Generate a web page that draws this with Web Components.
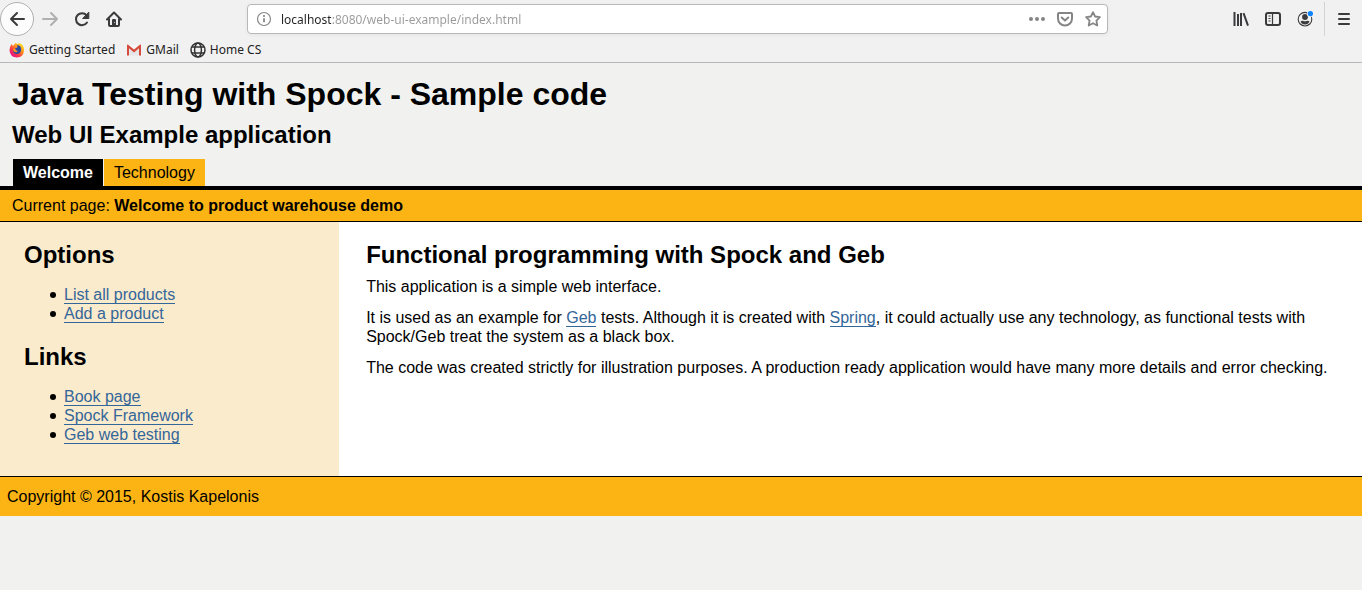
<!DOCTYPE html>
<html lang="en">
<head>
<meta charset="utf-8">
<meta name="viewport" content="width=device-width, initial-scale=1">
<title>Welcome to product warehouse demo</title>
<style>
  html { background: #f1f1ef; }
  body {
    margin: 0;
    color: #000;
    font: 16px/19px "Liberation Sans", Arial, sans-serif;
    --accent: #fbb414;
    --link: #336699;
  }
</style>
</head>
<body>
<browser-toolbar></browser-toolbar>
<bookmarks-bar></bookmarks-bar>
<site-header>
  <span slot="title">Java Testing with Spock - Sample code</span>
  <span slot="subtitle">Web UI Example application</span>
</site-header>
<current-page>Welcome to product warehouse demo</current-page>
<page-columns>
  <side-bar slot="side">
    <link-group heading="Options">
      <link-item>List all products</link-item>
      <link-item>Add a product</link-item>
    </link-group>
    <link-group heading="Links">
      <link-item>Book page</link-item>
      <link-item>Spock Framework</link-item>
      <link-item>Geb web testing</link-item>
    </link-group>
  </side-bar>
  <main-content slot="main"></main-content>
</page-columns>
<site-footer>Copyright © 2015, Kostis Kapelonis</site-footer>

<script>
  function define(name, markup, setup) {
    const template = document.createElement('template');
    template.innerHTML = markup;
    customElements.define(name, class extends HTMLElement {
      constructor() {
        super();
        this.attachShadow({ mode: 'open' }).append(template.content.cloneNode(true));
      }
      connectedCallback() { if (setup) setup(this, this.shadowRoot); }
    });
  }

  define('browser-toolbar', `
    <style>
      :host { display: flex; align-items: center; height: 38px; background: #f1f1f1; font: 12px/16px "Noto Sans", sans-serif; }
      button { box-sizing: border-box; display: grid; place-items: center; flex: none; width: 32px; height: 32px; margin: 0; padding: 0; border: 0; background: none; color: #3b3b3d; }
      button:disabled { color: #b0b0b0; }
      svg { display: block; width: 16px; height: 16px; fill: none; stroke: currentColor; stroke-width: 2; stroke-linecap: round; stroke-linejoin: round; }
      .back { width: 34px; height: 34px; border: 1px solid #b0b0b0; border-radius: 50%; background: #fcfcfc; }
      .nav { display: flex; align-items: center; flex: 1 1 0; }
      .field { box-sizing: border-box; display: flex; align-items: center; flex: 0 1 861px; min-width: 200px; height: 30px; margin-right: 7px; padding: 0 0 0 8px; border: 1px solid #b8b8b8; border-radius: 4px; background: #fff; box-shadow: 0 1px 4px #0000000d; }
      .field button { width: 28px; height: 28px; color: #858585; }
      .field .info { width: 16px; }
      input { flex: 1; min-width: 0; height: 26px; margin: 0 0 0 9px; padding: 0; border: 0; outline: 0; font: inherit; color: #999; background: linear-gradient(to right, #222 50px, #999 50px); background-clip: text; -webkit-background-clip: text; -webkit-text-fill-color: transparent; }
      .tools { display: flex; align-items: center; justify-content: flex-end; flex: 1 1 0; }
      .menu { margin-left: 3px; border-left: 1px solid #d4d4d4; width: 38px; height: 34px; }
    </style>
    <div class="nav">
      <button class="back" aria-label="Back"><svg viewBox="0 0 16 16"><path d="M15 8H2M8 2 2 8l6 6"/></svg></button>
      <button disabled aria-label="Forward"><svg viewBox="0 0 16 16"><path d="M1 8h14M9 2l6 6-6 6"/></svg></button>
      <button aria-label="Reload"><svg viewBox="0 0 16 16"><path d="M12.500 4.200A6 6 0 1 0 13 11.500"/><path fill="currentColor" stroke-width="1" d="M14.800 1.500v6H9z"/></svg></button>
      <button aria-label="Home"><svg viewBox="0 0 16 16"><path d="M1 8.500 8 1.500l7 7M3 8v6q0 1 1 1h8q1 0 1-1V8"/><path stroke="none" fill="currentColor" fill-rule="evenodd" d="M6 9q0-1 1-1h2q1 0 1 1v6H6zM8.300 11v1h.8v-1z"/></svg></button>
    </div>
    <div class="field">
      <button class="info" aria-label="Site information"><svg viewBox="0 0 16 16"><circle cx="8" cy="8" r="6.500" stroke-width="1.200"/><path d="M8 7.300v4" stroke-width="1.800" stroke-linecap="butt"/><circle cx="8" cy="5" r="1.100" fill="currentColor" stroke="none"/></svg></button>
      <input type="text" aria-label="Address" spellcheck="false" value="localhost:8080/web-ui-example/index.html">
      <button aria-label="Page actions"><svg viewBox="0 0 16 16"><g fill="currentColor" stroke="none"><circle cx="2" cy="8" r="2"/><circle cx="8" cy="8" r="2"/><circle cx="14" cy="8" r="2"/></g></svg></button>
      <button aria-label="Save to Pocket"><svg viewBox="0 0 16 16"><path d="M2 2h12q1 0 1 1v4.500a7 7 0 0 1-14 0V3q0-1 1-1zM4.700 6.500 8 9.600l3.300-3.100"/></svg></button>
      <button aria-label="Bookmark"><svg viewBox="0 0 16 16"><path stroke-width="1.800" d="m8 1.200 2.100 4.300 4.800.7-3.500 3.400.9 4.900L8 12.200l-4.300 2.300.9-4.900L1.100 6.200l4.800-.7z"/></svg></button>
    </div>
    <div class="tools">
      <button aria-label="Library"><svg viewBox="0 0 16 16"><path stroke-linecap="butt" d="M1.500 1v14M5 3v12M8 2v13M10.500 2.200l4.500 12.500"/></svg></button>
      <button aria-label="Sidebars"><svg viewBox="0 0 16 16"><rect x="1" y="2" width="14" height="12" rx="2"/><path stroke-width="1.200" d="M7.500 2v12M3.500 5h2M3.500 7.500h2M3.500 10h2" stroke-linecap="butt"/></svg></button>
      <button aria-label="Account"><svg viewBox="0 0 16 16"><circle cx="8" cy="8.200" r="6.800" stroke-width="1.100"/><g fill="currentColor" stroke="none"><circle cx="8" cy="6" r="2.900"/><path d="M3.500 10.500q1-1 2.500-.7 2 1 4 0 1.500-.3 2.500.7-1.200 3-4.500 3t-4.500-3"/></g><circle cx="13.300" cy="2.700" r="3.300" fill="#f1f1f1" stroke="none"/><circle cx="13.400" cy="2.600" r="2.600" fill="#0a84ff" stroke="none"/></svg></button>
      <button class="menu" aria-label="Menu"><svg viewBox="0 0 16 16"><path d="M3 3h10M3 8h10M3 13h10"/></svg></button>
    </div>`);

  define('bookmarks-bar', `
    <style>
      :host { box-sizing: border-box; display: flex; align-items: center; gap: 11px; height: 25px; padding: 0 9px 1px; border-bottom: 1px solid #b8b8b8; background: #f1f1f1; font: 12px/16px "Noto Sans", sans-serif; }
      a { display: flex; align-items: center; gap: 4px; color: #222; text-decoration: none; }
      svg { display: block; width: 16px; height: 16px; }
    </style>
    <a href="#getting-started"><svg viewBox="0 0 16 16"><defs><linearGradient id="fx" x1=".9" y1=".1" x2=".2" y2=".9"><stop offset="0" stop-color="#ffe226"/><stop offset=".35" stop-color="#ff9a1f"/><stop offset=".7" stop-color="#ff3647"/><stop offset="1" stop-color="#e31587"/></linearGradient></defs><path fill="url(#fx)" d="M2.500 2 4 4q1-2 3-3l1 1q4-2 6 2 1.500 2 1 5-.7 6-7 6.500Q1 15 .500 8.500.500 5 2.500 2"/><path fill="#2a4ba0" d="M8 3q4.500.500 4.200 5-.700 4-4.700 4Q4 11.500 4 8l2 1h2L5.500 7q0-1 2-1l1-1z"/><path fill="#ff9a1f" d="M4 7q1.500-.800 3 0L6 8.300l3 .700-1.500 1.200Q5 10.500 4 8z"/></svg>Getting Started</a>
    <a href="#gmail"><svg viewBox="0 0 16 16"><path fill="#e6e6e6" d="M1.500 3h13v10.500h-13z"/><path fill="#f8f8f8" d="M2 3h12L8 8.500z"/><path fill="#d54b3d" d="M1 2.500q1 0 1.500.500L8 7.600 13.500 3q.500-.500 1.500-.500v11h-2V6.200l-5 4.300-5-4.300v7.300H1z"/></svg>GMail</a>
    <a href="#home-cs"><svg viewBox="0 0 16 16" fill="none" stroke="#333" stroke-width="1.500"><circle cx="8" cy="8" r="7"/><ellipse cx="8" cy="8" rx="3.400" ry="7"/><path d="M2 5h12M2 11h12"/></svg>Home CS</a>`);

  define('site-header', `
    <style>
      :host { display: block; padding: 12px 12px 0; border-bottom: 4px solid #000; }
      h1, h2 { margin: 0; }
      h1 { font-size: 32px; line-height: 38px; }
      h2 { margin-top: 8px; font-size: 24px; line-height: 28px; }
      nav { display: flex; gap: 1px; margin-top: 10px; padding-left: 1px; }
      a { padding: 4px 10px; background: var(--accent); color: #000; text-decoration: none; }
      a[aria-current] { background: #000; color: #fff; font-weight: bold; }
    </style>
    <h1><slot name="title"></slot></h1>
    <h2><slot name="subtitle"></slot></h2>
    <nav aria-label="Pages"><a href="#welcome" aria-current="page">Welcome</a><a href="#technology">Technology</a></nav>`);

  define('current-page', `
    <style>
      :host { display: block; padding: 6px 12px; border-bottom: 1px solid #000; background: var(--accent); }
    </style>
    Current page: <strong><slot></slot></strong>`);

  define('page-columns', `
    <style>
      :host { display: grid; grid-template-columns: 24.9% 1fr; background: #fff; }
    </style>
    <slot name="side"></slot><slot name="main"></slot>`);

  define('side-bar', `
    <style>
      :host { display: flex; flex-direction: column; gap: 20px; padding: 19px 24px 32px; background: #fbebcd; }
    </style>
    <slot></slot>`);

  define('link-group', `
    <style>
      :host { display: block; }
      h2 { margin: 0 0 16px; font-size: 24px; line-height: 28px; }
      div { padding-left: 26px; }
    </style>
    <h2></h2>
    <div role="list"><slot></slot></div>`,
    (host, root) => { root.querySelector('h2').textContent = host.getAttribute('heading'); });

  define('link-item', `
    <style>
      :host { display: flex; align-items: center; gap: 8px; }
      :host::before { content: ""; flex: none; width: 6px; height: 6px; border-radius: 50%; background: #000; }
      a { color: var(--link); text-decoration: none; border-bottom: 1px solid; }
    </style>
    <div><a href="#"><slot></slot></a></div>`,
    host => host.setAttribute('role', 'listitem'));

  define('main-content', `
    <style>
      :host { display: block; padding: 19px 24px 32px 27px; }
      h2 { margin: 0 0 8px; font-size: 24px; line-height: 28px; }
      p { margin: 0 0 12px; }
      a { color: var(--link); text-decoration: none; border-bottom: 1px solid; }
    </style>
    <h2>Functional programming with Spock and Geb</h2>
    <p>This application is a simple web interface.</p>
    <p>It is used as an example for <a href="#geb">Geb</a> tests. Although it is created with <a href="#spring">Spring</a>, it could actually use any technology, as functional tests with Spock/Geb treat the system as a black box.</p>
    <p>The code was created strictly for illustration purposes. A production ready application would have many more details and error checking.</p>`);

  define('site-footer', `
    <style>
      :host { display: block; padding: 10px 7px; border-top: 1px solid #000; background: var(--accent); }
    </style>
    <slot></slot>`);
</script>
</body>
</html>
